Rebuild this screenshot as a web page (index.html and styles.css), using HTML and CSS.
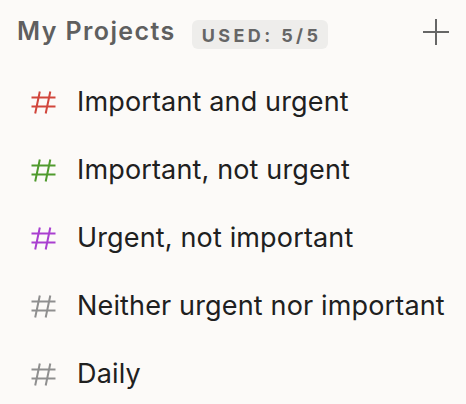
FILE: index.html
```html
<!DOCTYPE html>
<html lang="en">
<head>
<meta charset="utf-8">
<title>My Projects</title>
<link rel="stylesheet" href="styles.css">
</head>
<body>
<div class="panel">
  <div class="header">
    <span class="title">My Projects</span>
    <span class="badge">USED: 5/5</span>
    <span class="spacer"></span>
    <svg class="plus" width="26" height="26" viewBox="0 0 26 26" aria-hidden="true"><path d="M13 0v26M0 13h26" stroke="#666" stroke-width="2" fill="none"/></svg>
  </div>
  <ul class="list">
    <li class="row"><svg class="hash red" width="25" height="23" viewBox="0 0 25 23"><path d="M0.5 6.5H24.5M0.5 15.5H24.5M8.8 0.5L4.2 22.5M19.3 0.5L14.7 22.5" fill="none" stroke="currentColor" stroke-width="2"/></svg><span class="name">Important and urgent</span></li>
    <li class="row"><svg class="hash green" width="25" height="23" viewBox="0 0 25 23"><path d="M0.5 6.5H24.5M0.5 15.5H24.5M8.8 0.5L4.2 22.5M19.3 0.5L14.7 22.5" fill="none" stroke="currentColor" stroke-width="2"/></svg><span class="name">Important, not urgent</span></li>
    <li class="row"><svg class="hash purple" width="25" height="23" viewBox="0 0 25 23"><path d="M0.5 6.5H24.5M0.5 15.5H24.5M8.8 0.5L4.2 22.5M19.3 0.5L14.7 22.5" fill="none" stroke="currentColor" stroke-width="2"/></svg><span class="name">Urgent, not important</span></li>
    <li class="row"><svg class="hash gray" width="25" height="23" viewBox="0 0 25 23"><path d="M0.5 6.5H24.5M0.5 15.5H24.5M8.8 0.5L4.2 22.5M19.3 0.5L14.7 22.5" fill="none" stroke="currentColor" stroke-width="2"/></svg><span class="name">Neither urgent nor important</span></li>
    <li class="row"><svg class="hash gray" width="25" height="23" viewBox="0 0 25 23"><path d="M0.5 6.5H24.5M0.5 15.5H24.5M8.8 0.5L4.2 22.5M19.3 0.5L14.7 22.5" fill="none" stroke="currentColor" stroke-width="2"/></svg><span class="name">Daily</span></li>
  </ul>
</div>
</body>
</html>
```

FILE: styles.css
```css
html, body {
  margin: 0;
  padding: 0;
  background: #fcfaf8;
}
body {
  width: 466px;
  height: 404px;
  overflow: hidden;
  font-family: Inter, "Noto Sans", sans-serif;
}
.panel {
  display: flex;
  flex-direction: column;
}
.header {
  display: flex;
  align-items: center;
  height: 32px;
  padding: 16px 17px 0 17px;
}
.title {
  font-size: 25px;
  line-height: 30px;
  font-weight: 600;
  letter-spacing: 1.4px;
  color: #5f5f5f;
  margin-bottom: 2px;
  margin-right: -1px;
}
.badge {
  margin-left: 17px;
  margin-top: 4px;
  height: 29px;
  box-sizing: border-box;
  padding: 2px 7px 0 10px;
  line-height: 27px;
  font-size: 18px;
  font-weight: 700;
  letter-spacing: 3.4px;
  color: #666;
  background: #eeedeb;
  border-radius: 6px;
}
.spacer { flex: 1; }
.plus { display: block; margin-top: -1px; }
.list {
  list-style: none;
  margin: 20px 0 0 0;
  padding: 0;
}
.row {
  display: flex;
  align-items: center;
  height: 68px;
  padding-left: 31px;
}
.hash { display: block; flex: none; }
.red { color: #d1453b; }
.green { color: #4f9a2d; }
.purple { color: #a93fd0; }
.gray { color: #8f8f8f; }
.name {
  margin-left: 21px;
  font-size: 27px;
  line-height: 34px;
  letter-spacing: 0.15px;
  color: #202020;
}
```
